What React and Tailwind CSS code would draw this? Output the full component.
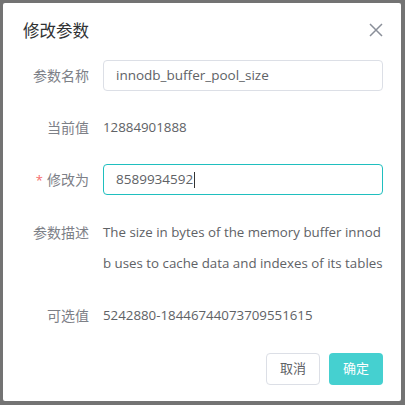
import React from "react";

const font = { fontFamily: '"Open Sans", "Noto Sans CJK SC", sans-serif' };

function Row({ label, required, children, className = "" }) {
  return (
    <div className={"flex items-start " + className}>
      <div className="w-[86px] shrink-0 text-right text-[14px] leading-[31px] text-[#7d8087]">
        {required && <span className="mr-[4px] text-[13px] text-[#f56c6c]">*</span>}
        {label}
      </div>
      <div className="ml-[14px] w-[280px]">{children}</div>
    </div>
  );
}

export default function App() {
  return (
    <div className="h-[405px] w-[405px] overflow-hidden bg-[#737373] pl-[3px] pt-[3px]" style={font}>
      <div className="relative h-[398px] w-[398px] rounded-[2px] bg-white">
        <div className="flex items-center justify-between pl-[20px] pr-[18px] pt-[16px]">
          <span className="text-[16.5px] leading-[24px] text-[#303133]">修改参数</span>
          <svg width="14" height="14" viewBox="0 0 14 14" className="-mt-[2px]">
            <path d="M1 1L13 13M13 1L1 13" stroke="#8a8f99" strokeWidth="1.5" />
          </svg>
        </div>
        <div className="mt-[17px] flex flex-col">
          <Row label="参数名称">
            <div className="flex h-[31px] items-center rounded-[4px] border border-[#dcdfe6] px-[12px] text-[13.5px] text-[#606266]">
              innodb_buffer_pool_size
            </div>
          </Row>
          <Row label="当前值" className="mt-[21px]">
            <div className="text-[13.3px] leading-[31px] text-[#606266]">12884901888</div>
          </Row>
          <Row label="修改为" required className="mt-[21px]">
            <div className="flex h-[31px] items-center rounded-[4px] border border-[#1fbfbf] px-[12px] text-[13.5px] text-[#606266]">
              8589934592<span className="ml-[1px] inline-block h-[16px] w-[1px] bg-[#333]" />
            </div>
          </Row>
          <Row label="参数描述" className="mt-[21px]">
            <div className="break-all text-[13.3px] leading-[31px] text-[#606266]">
              The size in bytes of the memory buffer innodb uses to cache data and indexes of its tables
            </div>
          </Row>
          <Row label="可选值" className="mt-[21px]">
            <div className="text-[13.3px] leading-[31px] text-[#606266]">5242880-18446744073709551615</div>
          </Row>
        </div>
        <div className="mt-[22px] flex justify-end gap-[9px] pr-[18px]">
          <button className="h-[32px] w-[54px] rounded-[4px] border border-[#dcdfe6] bg-white text-[13px] text-[#606266]">
            取消
          </button>
          <button className="h-[32px] w-[54px] rounded-[4px] bg-[#45d0d0] text-[13px] text-white">确定</button>
        </div>
      </div>
    </div>
  );
}
